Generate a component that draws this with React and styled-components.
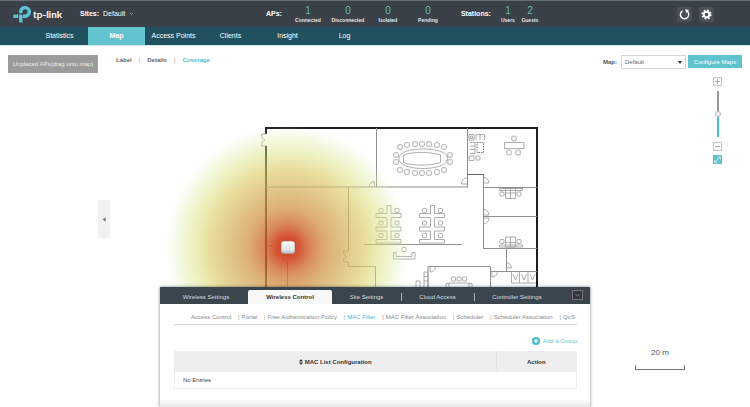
import { useState } from 'react'
import styled, { createGlobalStyle } from 'styled-components';

const navItems = ['Statistics', 'Map', 'Access Points', 'Clients', 'Insight', 'Log'];
const views = ['Label', 'Details', 'Coverage'];
const panelTabs = [
    { name: 'Wireless Settings', width: 84 },
    { name: 'Wireless Control', width: 84 },
    { name: 'Site Settings', width: 69 },
    { name: 'Cloud Access', width: 73 },
    { name: 'Controller Settings', width: 86 },
];
const controls = [
    'Access Control', 'Portal', 'Free Authentication Policy', 'MAC Filter',
    'MAC Filter Association', 'Scheduler', 'Scheduler Association', 'QoS',
];
const apStats = [
    { value: 1, label: 'Connected' },
    { value: 0, label: 'Disconnected' },
    { value: 0, label: 'Isolated' },
    { value: 0, label: 'Pending' },
];
const stationStats = [
    { value: 1, label: 'Users' },
    { value: 2, label: 'Guests' },
];

export default function App() {
    const [page, setPage] = useState('Map');
    const [view, setView] = useState('Coverage');
    const [tab, setTab] = useState('Wireless Control');
    const [control, setControl] = useState('MAC Filter');
    const [zoom, setZoom] = useState(50);

    return (
        <Page>
            <GlobalStyle />

            <Header>
                <Brand href="#">
                    <Logo />
                    <span>tp-link</span>
                </Brand>
                <Sites type="button">
                    <b>Sites:</b> Default
                    <svg width="5" height="4" viewBox="0 0 5 4"><path d="M1 1l1.5 1.5L4 1" fill="none" stroke="#8d949a" /></svg>
                </Sites>
                <Stats>
                    <b>APs:</b>
                    {apStats.map((s) => <Stat key={s.label} {...s} width={40} />)}
                </Stats>
                <Stats>
                    <b>Stations:</b>
                    {stationStats.map((s) => <Stat key={s.label} {...s} width={22} />)}
                </Stats>
                <Tools>
                    <ToolButton type="button" aria-label="Refresh">
                        <svg width="11" height="11" viewBox="0 0 11 11">
                            <path d="M7.3 1.7A4.2 4.2 0 1 1 3.6 1.8" fill="none" stroke="#fff" strokeWidth="1.4" />
                            <path d="M6.2 0.2L10 1.1L7.3 4z" fill="#fff" />
                        </svg>
                    </ToolButton>
                    <ToolButton type="button" aria-label="Settings">
                        <svg width="11" height="11" viewBox="0 0 11 11">
                            <circle cx="5.5" cy="5.5" r="4.2" fill="none" stroke="#fff" strokeWidth="1.8" strokeDasharray="1.75 1.55" />
                            <circle cx="5.5" cy="5.5" r="2.8" fill="none" stroke="#fff" strokeWidth="2" />
                        </svg>
                    </ToolButton>
                </Tools>
            </Header>

            <Nav>
                {navItems.map((item) => (
                    <NavButton type="button" key={item} $active={page === item} onClick={() => setPage(item)}>
                        {item}
                    </NavButton>
                ))}
            </Nav>

            <Main>
                <Canvas>
                    <FloorPlan />
                </Canvas>

                <Toolbar>
                    <UnplacedButton type="button">Unplaced APs(drag onto map)</UnplacedButton>
                    <Views>
                        {views.map((v) => (
                            <ViewButton type="button" key={v} $active={view === v} onClick={() => setView(v)}>{v}</ViewButton>
                        ))}
                    </Views>
                    <MapLabel htmlFor="map">Map:</MapLabel>
                    <MapSelect>
                        <select id="map" defaultValue="Default">
                            <option>Default</option>
                        </select>
                        <svg width="4" height="3" viewBox="0 0 4 3"><path d="M0 0h4L2 3z" fill="#333" /></svg>
                    </MapSelect>
                    <ConfigureButton type="button">Configure Maps</ConfigureButton>
                </Toolbar>

                <ZoomControl>
                    <ZoomButton type="button" aria-label="Zoom in" onClick={() => setZoom(Math.min(100, zoom + 10))}>
                        <svg width="5" height="5" viewBox="0 0 5 5"><path d="M0 2.5h5M2.5 0v5" stroke="#aaa" /></svg>
                    </ZoomButton>
                    <ZoomRange
                        type="range"
                        aria-label="Zoom"
                        value={zoom}
                        onChange={(e) => setZoom(Number(e.target.value))}
                        style={{ '--above': `${100 - zoom}%` }}
                    />
                    <ZoomButton type="button" aria-label="Zoom out" onClick={() => setZoom(Math.max(0, zoom - 10))}>
                        <svg width="5" height="5" viewBox="0 0 5 5"><path d="M0 2.5h5" stroke="#aaa" /></svg>
                    </ZoomButton>
                    <ZoomButton type="button" aria-label="Measure" $filled>
                        <svg width="7" height="7" viewBox="0 0 7 7">
                            <path d="M0.5 6.5L6.5 0.8M3.8 1h2.6v2.4M0.8 3.8v2.6h2.4" fill="none" stroke="#d8f3f6" strokeWidth="0.8" />
                        </svg>
                    </ZoomButton>
                </ZoomControl>

                <Handle type="button" aria-label="Show access points">
                    <svg width="4" height="5" viewBox="0 0 4 5"><path d="M3.6 0.3v4.4L0.6 2.5z" fill="#777" /></svg>
                </Handle>

                <Scale>
                    20 m
                    <ScaleBar />
                </Scale>

                <Panel>
                    <PanelHeader>
                        {panelTabs.map((t) => (
                            <PanelTab
                                type="button"
                                key={t.name}
                                $width={t.width}
                                $active={tab === t.name}
                                $divider={t.name === 'Cloud Access' || t.name === 'Controller Settings'}
                                onClick={() => setTab(t.name)}
                            >
                                {t.name}
                            </PanelTab>
                        ))}
                        <Collapse type="button" aria-label="Collapse">
                            <svg width="5" height="3" viewBox="0 0 5 3"><path d="M0.5 0.5l2 1.5l2-1.5" fill="none" stroke="#8b8388" strokeWidth="0.8" /></svg>
                        </Collapse>
                    </PanelHeader>
                    <PanelBody>
                        <SubNav>
                            {controls.map((c) => (
                                <SubNavItem key={c}>
                                    <SubNavButton type="button" $active={control === c} onClick={() => setControl(c)}>{c}</SubNavButton>
                                </SubNavItem>
                            ))}
                        </SubNav>
                        <AddButton type="button">
                            <svg width="8" height="8" viewBox="0 0 8 8">
                                <circle cx="4" cy="4" r="4" fill="#4fbccb" />
                                <path d="M2 4h4M4 2v4" stroke="#fff" strokeWidth="1.2" />
                            </svg>
                            Add a Group
                        </AddButton>
                        <Table>
                            <thead>
                                <tr>
                                    <th>
                                        <svg width="4" height="6" viewBox="0 0 4 6"><path d="M0 2.4L2 0l2 2.4zM0 3.6h4L2 6z" fill="#333" /></svg>
                                        {' '}MAC List Configuration
                                    </th>
                                    <th>Action</th>
                                </tr>
                            </thead>
                            <tbody>
                                <tr>
                                    <td colSpan="2">No Entries</td>
                                </tr>
                            </tbody>
                        </Table>
                    </PanelBody>
                </Panel>
            </Main>
        </Page>
    )
}

function Stat({ value, label, width }) {
    return (
        <StatBox $width={width}>
            <strong>{value}</strong>
            <span>{label}</span>
        </StatBox>
    )
}

function Logo() {
    return (
        <svg width="18" height="18" viewBox="0 0 18 18" fill="none" stroke="#5cc4d2" strokeWidth="3.4">
            <path d="M7.8 8.2V6.2A4.3 4.3 0 1 1 12 11.2H9.8" strokeLinejoin="round" />
            <path d="M0.3 11.3H4.6" />
            <path d="M4 11.3H7.8V17.6" strokeLinejoin="round" />
            <path d="M5.4 8V13" stroke="#3b4148" strokeWidth="0.8" />
        </svg>
    )
}

const tableChairs = [
    [400, 147], [407, 145], [415, 144], [422, 144], [429, 144], [437, 145], [444, 147],
    [400, 170], [407, 172], [415, 173], [422, 173], [429, 173], [437, 172], [444, 170],
    [396, 155], [396, 162], [450, 155], [450, 162],
];

function Chairs({ at, size = 4 }) {
    return at.map(([x, y]) => (
        <rect key={`${x}-${y}`} x={x - size / 2} y={y - size / 2} width={size} height={size} rx="0.8" />
    ))
}

// six desks in three rows around a shared spine
function DeskCluster({ x }) {
    return (
        <g transform={`translate(${x} 0)`}>
            <path d="M11 205.5h4v8h10v4H15v9.500h10v4H15v8.500h10v3.500H0v-3.500h11v-8.500H0v-4h11v-9.500H0v-4h11z" />
            <Chairs at={[[5, 210.5], [21, 210.5], [5, 223], [21, 223], [5, 235.5], [21, 235.5]]} size={4} />
        </g>
    )
}

function OfficeDesk({ transform }) {
    return (
        <g transform={transform}>
            <path d="M499.500 188.500h23v2h-23zM505.500 188.500h10v10h-10zM510.500 188.500v10M505.500 193h10" />
            <Chairs at={[[502, 194], [519, 194]]} />
        </g>
    )
}

function FloorPlan() {
    return (
        <svg width="480" height="362" viewBox="135 45 480 362" role="img" aria-label="Floor plan">
            <defs>
                <radialGradient id="heat">
                    <stop offset="0" stopColor="#cc2a12" stopOpacity="0.95" />
                    <stop offset="0.1" stopColor="#d0401c" stopOpacity="0.88" />
                    <stop offset="0.2" stopColor="#cf6a30" stopOpacity="0.78" />
                    <stop offset="0.32" stopColor="#d29246" stopOpacity="0.75" />
                    <stop offset="0.48" stopColor="#d6af58" stopOpacity="0.7" />
                    <stop offset="0.64" stopColor="#dccb66" stopOpacity="0.64" />
                    <stop offset="0.77" stopColor="#dfe07c" stopOpacity="0.5" />
                    <stop offset="0.9" stopColor="#ddeea0" stopOpacity="0.3" />
                    <stop offset="1" stopColor="#e8f8c0" stopOpacity="0" />
                </radialGradient>
                <linearGradient id="ap" x2="0" y2="1">
                    <stop offset="0" stopColor="#fbfbfb" />
                    <stop offset="0.7" stopColor="#dfe2e6" />
                    <stop offset="1" stopColor="#aeb2b6" />
                </linearGradient>
            </defs>

            <g fill="none" stroke="#1d1d1f" strokeWidth="2">
                <path d="M266 134V128H537V300" />
                <path d="M266 146V300" />
            </g>

            <g fill="none" stroke="#8f8f8f" strokeWidth="1">
                <path d="M266 187H468M376.500 128V187M348.500 187V251M348.500 262V266.500H375.500V300M287.500 262V300M266 246H273" />
                <path d="M364 244.500H462M467.500 128V187M483.500 174V248M483 187.500H537M483 216.500H537M483 248.500H537" />
                <path d="M506.500 248V271.500M491 271.500H537M428 300V266.500H490.500V300" />
                <path d="M467 174.500H484" stroke="#666" />
            </g>

            <g fill="none" stroke="#9a9a9a" strokeWidth="0.8">
                {/* doors */}
                <path d="M266 134h-4.500c0 3 1 5 3.500 6c-2.500 1-3.500 3-3.500 6H266" />
                <path d="M374.500 187v-5.500c-3 0-5 2-5.500 5.500M467 184h-5.500c0-3 2-6 5.500-6M484 183h5c0-3-2-5-5-6" />
                <path d="M484 215h5c0-3-2-5-5-6M484 218h5c0 3-2 5-5 6M507 268h4.500c0-3-2-5-4.500-5M492 272v5c3 0 5-2 5.500-5" />
                <path d="M348 251h-4.500c0 3 1 5 3 5.500c-2 0.500-3 2.500-3 5.500H348M430 267v5c3 0 5-2 5.500-5" />

                {/* meeting room */}
                <path d="M399 158.500C399 152 410 149 423 149S447.500 152 447.500 158.500S436 168.500 423 168.500S399 165 399 158.500z" />
                <path d="M403.500 155C414 151.500 429 151.500 440.500 155V162.500C429 166 414 166 403.500 162.500z" />
                <Chairs at={tableChairs} size={4.5} />

                <DeskCluster x={376} />
                <DeskCluster x={419.5} />

                {/* reception */}
                <path d="M393.500 252.500h2.500v4h16v-4h3v6.500h-21.500z" />
                <Chairs at={[[404, 249.500]]} />

                {/* lounge */}
                <path d="M469 134.500h5v5.500h-5zM470.500 136h2v2.500h-2zM476 140v-5.500h8.500v5.500M480 134.500v5.500M470 142.500h5v11h-5M470 146h5M470 149.500h5M469 156h5v4.500h-5z" />
                <path d="M477 142.500h6.500v10H477z" stroke="#555" strokeDasharray="1.500 1" />
                <Chairs at={[[478, 158]]} />

                {/* offices */}
                <path d="M504.500 142.500h19.500v6h-19.500z" />
                <Chairs at={[[514, 138.500], [509, 152.500], [518, 152.500]]} size={4.5} />
                <OfficeDesk />
                <OfficeDesk transform="matrix(1 0 0 -1 0 435.500)" />

                {/* restrooms and small meeting room */}
                <path d="M511.500 272v11H536M519.500 272v11M528 272v11M513 274l2.500 6l2.500-6M521.500 274l2.500 6l2.500-6M530 274l2.500 6l2.500-6" />
                <Chairs at={[[453.500, 279], [459, 279], [464.500, 279]]} />
                <path d="M449 287v-4h20v4M446 288v-4.500h3M472 288v-4.500h-3M424 272h4v18h-4zM424 276.500h4M424 281h4M416 288v-7h4v7" />
            </g>

            <circle cx="287.500" cy="247.500" r="122" fill="url(#heat)" />
            <rect x="281" y="241" width="14" height="13" rx="3" fill="url(#ap)" stroke="#a65a3c" strokeWidth="0.5" />
        </svg>
    )
}

const GlobalStyle = createGlobalStyle`
    * {
        box-sizing: border-box;
    }

    body {
        margin: 0;
        background: #fefefe;
        color: #444;
        font-family: "Liberation Sans", Arial, sans-serif;
        font-size: 6px;
        line-height: 8px;
    }

    button, select {
        margin: 0;
        padding: 0;
        border: 0;
        background: none;
        color: inherit;
        font: inherit;
        white-space: nowrap;
        cursor: pointer;
    }

    svg {
        flex-shrink: 0;
    }
`

const Page = styled.div`
    display: flex;
    flex-direction: column;
    min-height: 100vh;
`

const Header = styled.header`
    display: flex;
    align-items: center;
    height: 27px;
    padding: 0 36px 0 13px;

    border-top: 1px solid #666e73;
    background: #3b4148;
    color: #fff;

    font-size: 7px;
`

const Brand = styled.a`
    display: flex;
    align-items: center;
    gap: 2px;
    width: 67px;

    color: #fff;
    font-family: Lato, sans-serif;
    font-size: 10px;
    font-weight: 700;
    text-decoration: none;
`

const Sites = styled.button`
    display: flex;
    align-items: center;
    gap: 4px;
    width: 186px;
`

const Stats = styled.div`
    display: flex;
    align-items: center;
    margin-right: 13px;

    > b {
        margin-right: 6px;
    }
`

const StatBox = styled.div`
    display: flex;
    flex-direction: column;
    align-items: center;
    width: ${(props) => props.$width}px;

    strong {
        color: #5bb9b0;
        font-size: 10px;
        font-weight: 400;
        line-height: 11px;
    }

    span {
        color: #e4e6e8;
        font-size: 5px;
        font-weight: 700;
        line-height: 8px;
    }
`

const Tools = styled.div`
    display: flex;
    gap: 7px;
    margin-left: auto;
`

const ToolButton = styled.button`
    display: flex;
    align-items: center;
    justify-content: center;
    width: 15px;
    height: 15px;

    border-radius: 2px;
    background: #4a5057;
`

const Nav = styled.nav`
    display: flex;
    height: 18px;
    padding-left: 31px;

    background: #21515f;
`

const NavButton = styled.button`
    width: 57px;

    background: ${(props) => props.$active ? '#63c3cf' : 'none'};
    color: #fff;

    font-size: 7px;
    font-weight: ${(props) => props.$active ? 700 : 400};
`

const Main = styled.main`
    position: relative;
    flex: 1;
    min-height: 360px;

    border-top: 1px solid #cfeaf0;
`

const Canvas = styled.div`
    position: absolute;
    inset: -1px 0 0;

    display: flex;
    justify-content: center;
    overflow: hidden;
`

const Toolbar = styled.div`
    position: relative;

    display: flex;
    align-items: flex-start;
    padding: 9px 8px 0;
`

const UnplacedButton = styled.button`
    width: 90px;
    height: 18px;

    background: #9b9b9b;
    color: #eee;
`

const Views = styled.div`
    display: flex;
    margin: 1px auto 0 18px;
`

const ViewButton = styled.button`
    color: ${(props) => props.$active ? '#4fbfce' : '#666'};
    font-weight: 700;

    &:not(:first-child)::before {
        content: '|';
        margin: 0 7px;
        color: #999;
        font-weight: 400;
    }
`

const MapLabel = styled.label`
    margin: 3px 4px 0 0;

    color: #555;
    font-weight: 700;
`

const MapSelect = styled.div`
    display: flex;
    align-items: center;
    width: 65px;
    height: 14px;
    margin-right: 2px;

    border: 1px solid #d6d6d6;
    background: #fff;

    select {
        flex: 1;
        height: 12px;
        padding-left: 3px;
        appearance: none;
        color: #666;
    }

    svg {
        margin-right: 3px;
        pointer-events: none;
    }
`

const ConfigureButton = styled.button`
    width: 54px;
    height: 13px;

    background: #5fc3ce;
    color: #fff;
`

const ZoomControl = styled.div`
    position: relative;

    display: flex;
    flex-direction: column;
    align-items: center;
    gap: 4px;
    width: 9px;
    margin: 4px 28px 0 auto;
`

const ZoomButton = styled.button`
    display: flex;
    align-items: center;
    justify-content: center;
    width: 9px;
    height: 9px;

    border: 1px solid ${(props) => props.$filled ? '#5fc3ce' : '#c6c0c6'};
    background: ${(props) => props.$filled ? '#5fc3ce' : '#fff'};
`

const ZoomRange = styled.input`
    width: 7px;
    height: 46px;
    margin: 1px 0;

    appearance: none;
    background: linear-gradient(to bottom, #999 var(--above), #4fbfce var(--above)) center / 2px 100% no-repeat;
    writing-mode: vertical-lr;
    direction: rtl;

    &::-webkit-slider-thumb {
        width: 6px;
        height: 6px;

        appearance: none;
        border: 1px solid #b9b3c4;
        border-radius: 50%;
        background: #f4f4f8;
    }
`

const Handle = styled.button`
    position: absolute;
    top: 154px;
    left: 98px;

    display: flex;
    align-items: center;
    justify-content: center;
    width: 12px;
    height: 38px;

    border-radius: 2px;
    background: #f1f1f1;
`

const Scale = styled.div`
    position: absolute;
    right: 65px;
    bottom: 37px;

    width: 50px;

    color: #555;
    font-size: 8px;
    line-height: 10px;
    text-align: center;
`

const ScaleBar = styled.div`
    height: 5px;
    margin-top: 7px;

    border: 1px solid #777;
    border-top: 0;
`

const Panel = styled.section`
    position: absolute;
    bottom: 0;
    left: 50%;
    transform: translateX(-50%);

    width: 430px;
    max-width: 100%;

    background: #fff;
    box-shadow: 0 0 3px rgba(0, 0, 0, 0.5);
`

const PanelHeader = styled.div`
    display: flex;
    align-items: flex-end;
    height: 17px;
    padding-left: 4px;

    background: #3a454e;
    color: #d9dde0;
`

const PanelTab = styled.button`
    position: relative;

    width: ${(props) => props.$width}px;
    height: 14px;

    border-radius: 2px 2px 0 0;
    background: ${(props) => props.$active ? '#f8f8f8' : 'none'};
    color: ${(props) => props.$active ? '#333' : 'inherit'};
    font-weight: ${(props) => props.$active ? 700 : 400};

    &::before {
        content: '';
        position: absolute;
        top: 3px;
        left: 0;

        display: ${(props) => props.$divider ? 'block' : 'none'};
        height: 8px;

        border-left: 1px solid #aab0b4;
    }
`

const Collapse = styled.button`
    display: flex;
    align-items: center;
    justify-content: center;
    width: 11px;
    height: 10px;
    margin: 0 7px 4px auto;

    border: 1px solid #777078;
    background: #33383f;
`

const PanelBody = styled.div`
    padding: 9px 13px 18px 14px;

    background: linear-gradient(to bottom, #fff 92%, #e6e6e6);
`

const SubNav = styled.nav`
    display: flex;
    justify-content: space-between;
    padding: 0 2px 3px 17px;

    border-bottom: 1px solid #d2d2d2;
`

const SubNavItem = styled.span`
    color: #999;

    &:not(:first-child)::before {
        content: '|';
        margin-right: 2px;
    }
`

const SubNavButton = styled.button`
    color: ${(props) => props.$active ? '#45b8dc' : '#888'};
`

const AddButton = styled.button`
    display: flex;
    align-items: center;
    gap: 3px;
    margin: 12px 0 6px auto;

    color: #5fc3d2;
`

const Table = styled.table`
    width: 100%;

    border: 1px solid #ececec;
    border-collapse: collapse;

    th {
        height: 20px;
        padding: 0;

        background: #eee;
        color: #333;
    }

    th + th {
        width: 20%;
        border-left: 1px solid #e6e6e6;
    }

    th svg {
        vertical-align: middle;
    }

    td {
        height: 17px;
        padding: 0 8px;
    }
`
